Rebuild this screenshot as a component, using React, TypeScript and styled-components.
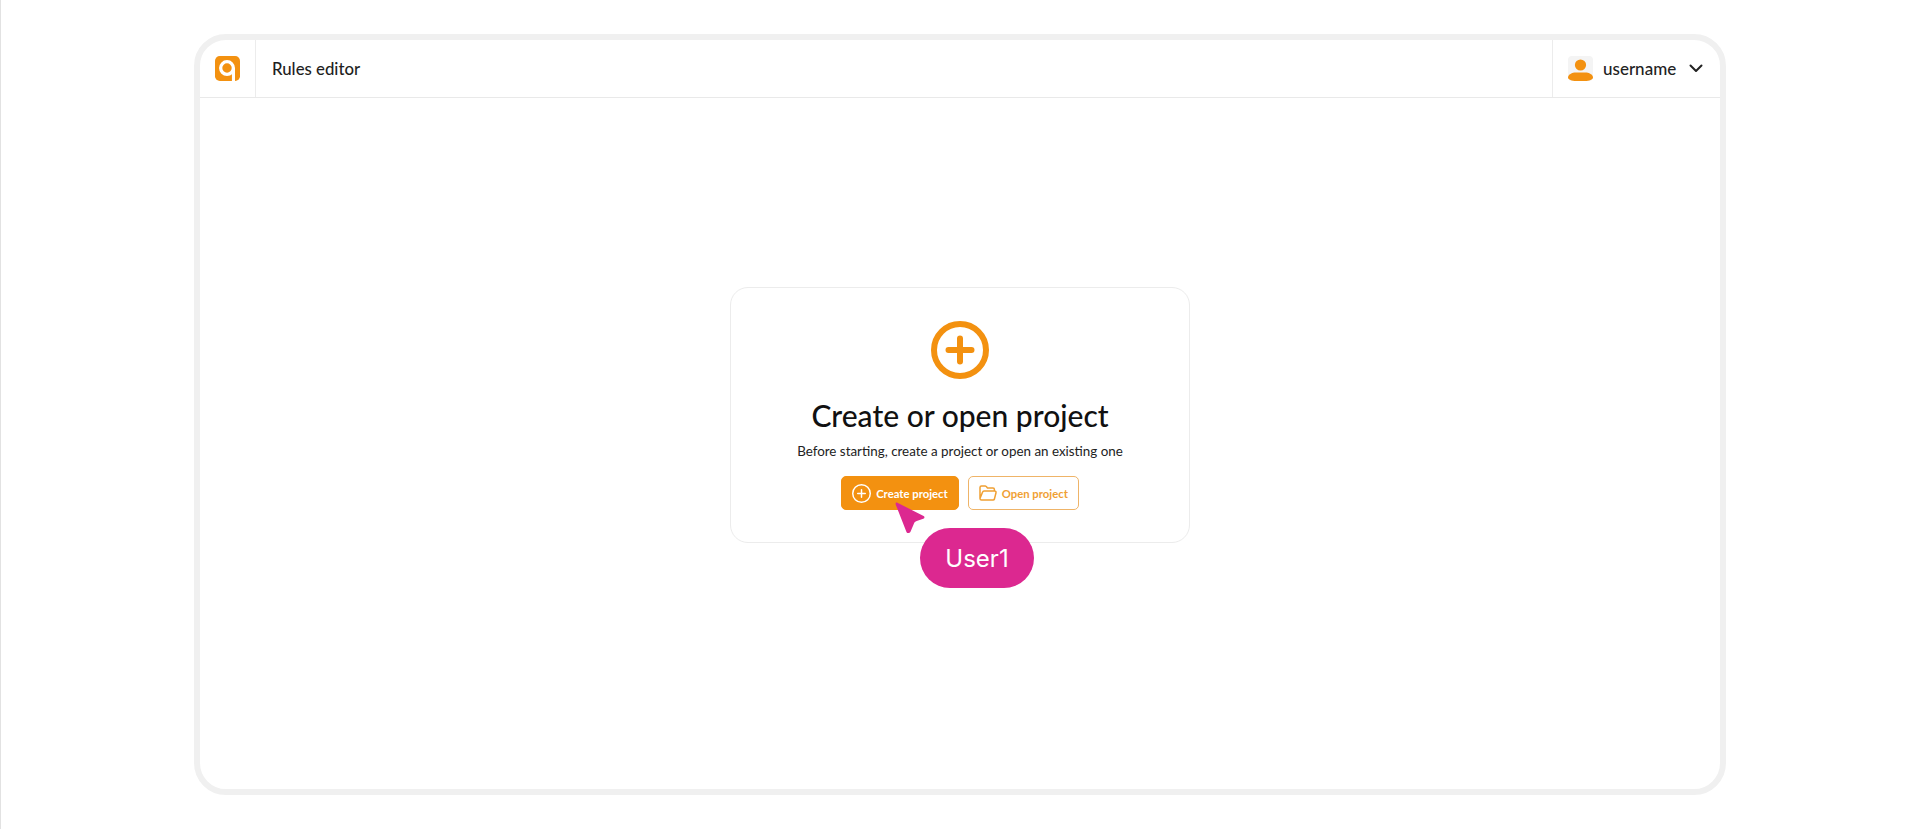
import React from "react";
import styled, { createGlobalStyle } from "styled-components";

const ORANGE = "#f39110";
const PINK = "#dc2890";

const GlobalStyle = createGlobalStyle`
  html, body {
    margin: 0;
    padding: 0;
    background: #fff;
    font-family: "Lato", "Open Sans", sans-serif;
  }
`;

const LogoIcon = () => (
  <svg width="25" height="25" viewBox="0 0 26 26">
    <rect width="26" height="26" rx="5" fill={ORANGE} />
    <circle cx="12.5" cy="12.5" r="6.6" fill="none" stroke="#fff" strokeWidth="3.4" />
    <path d="M19.2 12.5V26" stroke="#fff" strokeWidth="3.2" fill="none" />
  </svg>
);

const AvatarIcon = () => (
  <svg width="25" height="25" viewBox="0 0 25 25">
    <rect width="25" height="25" rx="4" fill="#f4f4f4" />
    <circle cx="12.5" cy="9" r="5.6" fill={ORANGE} />
    <path d="M0 21.500c0-3 4-5 8-5h9c4 0 8 2 8 5 0 2.200-4 3.500-8 3.500H8c-4 0-8-1.300-8-3.500z" fill={ORANGE} />
  </svg>
);

const Chevron = () => (
  <svg width="14" height="9" viewBox="0 0 14 9">
    <path d="M1.500 1.500L7 7l5.500-5.500" fill="none" stroke="#222" strokeWidth="2" strokeLinecap="round" strokeLinejoin="round" />
  </svg>
);

const PlusCircle: React.FC<{ size: number; color: string; weight: number }> = ({ size, color, weight }) => (
  <svg width={size} height={size} viewBox="0 0 58 58">
    <circle cx="29" cy="29" r={29 - weight / 2} fill="none" stroke={color} strokeWidth={weight} />
    <path d="M29 17.500v23M17.500 29h23" fill="none" stroke={color} strokeWidth={weight} strokeLinecap="round" />
  </svg>
);

const FolderIcon = () => (
  <svg width="18" height="16" viewBox="0 0 18 16">
    <path
      d="M1 13.500V2.500C1 1.700 1.600 1 2.500 1h3.600c.5 0 .9.200 1.200.6L8.500 3H14c.8 0 1.400.6 1.400 1.400V6M1 13.500c0 .8.600 1.500 1.500 1.500h11.600c.6 0 1.100-.4 1.300-.9L17 7.800c.2-.9-.4-1.800-1.400-1.800H5c-.7 0-1.200.4-1.400 1L1 13.500z"
      fill="none"
      stroke="#f0a033"
      strokeWidth="1.500"
      strokeLinejoin="round"
    />
  </svg>
);

const App: React.FC = () => (
  <Page>
    <GlobalStyle />
    <Frame>
      <Header>
        <LogoCell>
          <LogoIcon />
        </LogoCell>
        <Title>Rules editor</Title>
        <UserCell>
          <AvatarIcon />
          <UserName>username</UserName>
          <Chevron />
        </UserCell>
      </Header>
      <Content>
        <Card>
          <PlusCircle size={58} color={ORANGE} weight={6} />
          <Heading>Create or open project</Heading>
          <SubText>Before starting, create a project or open an existing one</SubText>
          <Actions>
            <ActionButton $primary>
              <PlusCircle size={19} color="#fff" weight={4.500} />
              Create project
            </ActionButton>
            <ActionButton>
              <FolderIcon />
              Open project
            </ActionButton>
          </Actions>
          <Cursor width="33" height="36" viewBox="0 0 30 33">
            <path
              d="M3 3.500L27 15.500c1.200.6 1 2.300-.3 2.700l-6 2c-1.300.4-2.200 1.300-2.600 2.600L15 30c-.5 1.300-2.800 1.800-3.600.5L1.500 5.200C1 3.800 1.800 2.900 3 3.500z"
              fill={PINK}
            />
          </Cursor>
          <UserTag>User1</UserTag>
        </Card>
      </Content>
    </Frame>
  </Page>
);

export default App;

const Page = styled.div`
  box-sizing: border-box;
  height: 829px;
  padding: 34px 194px 34px 193px;
  border-left: 1px solid #e2e2e2;
  overflow: hidden;
`;

const Frame = styled.div`
  box-sizing: border-box;
  height: 761px;
  display: flex;
  flex-direction: column;
  background: #fff;
  border: 6px solid #f0f0f0;
  border-radius: 32px;
  overflow: hidden;
`;

const Header = styled.header`
  flex: none;
  height: 57px;
  display: flex;
  align-items: center;
  border-bottom: 1px solid #e9e9e9;
`;

const LogoCell = styled.div`
  box-sizing: border-box;
  width: 56px;
  height: 100%;
  padding-left: 15px;
  display: flex;
  align-items: center;
  border-right: 1px solid #ececec;
`;

const Title = styled.div`
  flex: 1;
  padding-left: 16px;
  font-size: 16.8px;
  font-weight: 500;
  color: #1f1f1f;
`;

const UserCell = styled.div`
  box-sizing: border-box;
  width: 168px;
  height: 100%;
  padding-left: 15px;
  display: flex;
  align-items: center;
  border-left: 1px solid #ececec;
`;

const UserName = styled.span`
  width: 86px;
  padding-left: 10px;
  font-size: 17px;
  font-weight: 500;
  color: #222;
`;

const Content = styled.main`
  flex: 1;
  padding-top: 189px;
  display: flex;
  justify-content: center;
  align-items: flex-start;
`;

const Card = styled.section`
  position: relative;
  box-sizing: border-box;
  width: 460px;
  height: 256px;
  padding-top: 33px;
  display: flex;
  flex-direction: column;
  align-items: center;
  border: 1px solid #ececec;
  border-radius: 18px;
`;

const Heading = styled.h1`
  margin: 18px 0 0;
  font-size: 30px;
  line-height: 36px;
  font-weight: 500;
  color: #111;
`;

const SubText = styled.p`
  margin: 9px 0 0;
  font-size: 13.4px;
  line-height: 18px;
  color: #222;
`;

const Actions = styled.div`
  margin-top: 16px;
  display: flex;
  gap: 9px;
`;

const ActionButton = styled.button<{ $primary?: boolean }>`
  box-sizing: border-box;
  height: 34px;
  padding: 0 10px;
  display: flex;
  align-items: center;
  gap: 5px;
  font-family: inherit;
  font-size: 11.3px;
  font-weight: 700;
  color: ${(p) => (p.$primary ? "#fff" : "#f0a033")};
  background: ${(p) => (p.$primary ? ORANGE : "#fff")};
  border: 1px solid ${(p) => (p.$primary ? ORANGE : "#efb468")};
  border-radius: 5px;
`;

const Cursor = styled.svg`
  position: absolute;
  left: 163px;
  top: 211px;
`;

const UserTag = styled.div`
  position: absolute;
  left: 189px;
  top: 240px;
  width: 114px;
  height: 60px;
  display: flex;
  align-items: center;
  justify-content: center;
  font-family: "Inter", sans-serif;
  font-size: 24px;
  color: #fff;
  background: ${PINK};
  border-radius: 30px;
`;
